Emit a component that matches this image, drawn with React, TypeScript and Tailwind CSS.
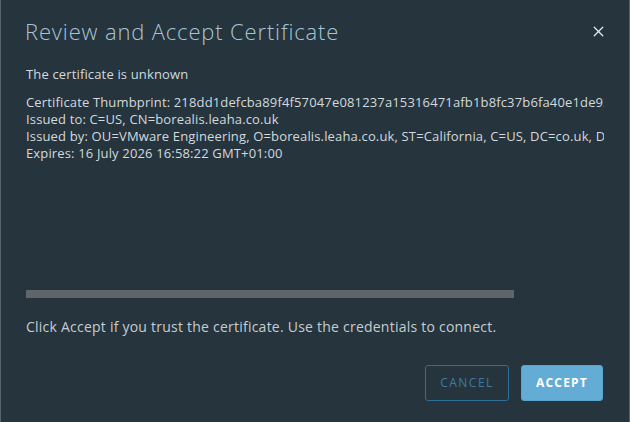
import React from 'react';
import { X } from 'lucide-react';

export default function App() {
  const font = { fontFamily: '"Open Sans", Lato, sans-serif' };

  return (
    <div
      className="w-[630px] h-[422px] bg-[#25343d] border-x border-[#59636a] flex flex-col overflow-hidden"
      style={font}
    >
      {/* Header */}
      <div className="flex items-start justify-between pl-[24px] pr-[22px] pt-[18px]">
        <h1 className="text-[22px] leading-[26px] font-light text-[#a9c4d6] tracking-[0.85px]">
          Review and Accept Certificate
        </h1>
        <button className="mt-[5px] text-[#e8ecef]">
          <X className="w-[17px] h-[17px]" strokeWidth={1.75} />
        </button>
      </div>

      {/* Body */}
      <div className="px-[25px] mt-[22px] text-[13px] leading-[17px] text-[#d3d9dd] tracking-[0.15px]">
        <p>The certificate is unknown</p>
        <div className="mt-[11px] whitespace-nowrap overflow-hidden">
          <p>Certificate Thumbprint: 218dd1defcba89f4f57047e081237a15316471afb1b8fc37b6fa40e1de93e1a5c9</p>
          <p>Issued to: C=US, CN=borealis.leaha.co.uk</p>
          <p>Issued by: OU=VMware Engineering, O=borealis.leaha.co.uk, ST=California, C=US, DC=co.uk, DC=leaha, CN=CA</p>
          <p>Expires: 16 July 2026 16:58:22 GMT+01:00</p>
        </div>
      </div>

      {/* Scroll bar */}
      <div className="px-[25px] mt-[128px]">
        <div className="w-[488px] h-[8px] bg-[#60656a]" />
      </div>

      <p className="px-[25px] mt-[19px] text-[14px] leading-[20px] text-[#c6ccd0] tracking-[0.23px]">
        Click Accept if you trust the certificate. Use the credentials to connect.
      </p>

      {/* Footer */}
      <div className="flex justify-end gap-[12px] pr-[26px] mt-[28px]">
        <button className="w-[84px] h-[36px] rounded-[3px] border border-[#2f6f99] text-[#3b7bab] text-[12px] tracking-[1.5px] font-medium">
          CANCEL
        </button>
        <button className="w-[82px] h-[36px] rounded-[3px] bg-[#63acd6] border border-[#5aa3cd] text-white text-[12px] tracking-[1.2px] font-bold">
          ACCEPT
        </button>
      </div>
    </div>
  );
}
